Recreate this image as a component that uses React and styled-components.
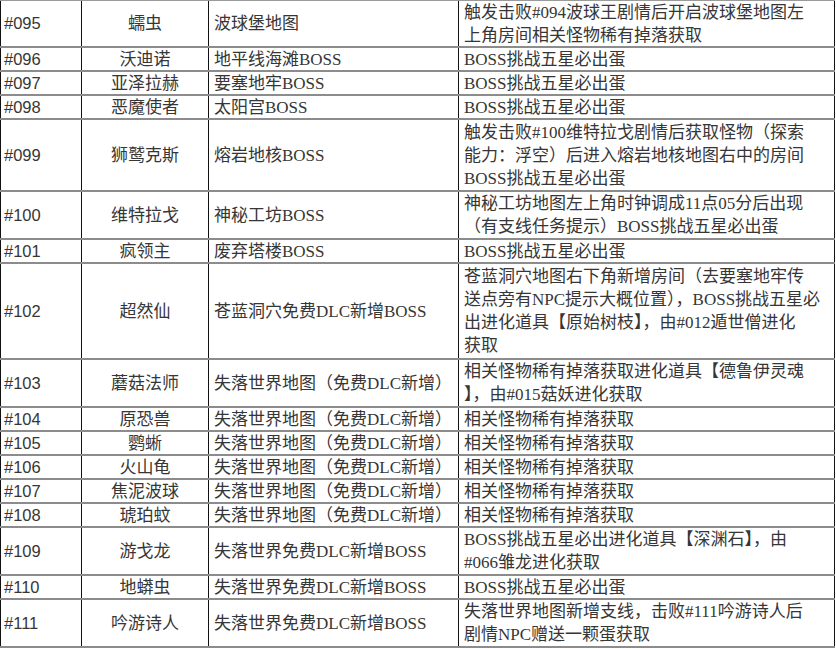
import styled, { createGlobalStyle } from "styled-components";

const GlobalStyle = createGlobalStyle`
  html, body {
    margin: 0;
    padding: 0;
    background: #ffffff;
  }
  body {
    font-family: "Liberation Serif", "Noto Sans CJK SC", serif;
    color: #363636;
  }
`;

const ALL_BOSS = ["BOSS挑战五星必出蛋"];
const LOST_MAP = "失落世界地图（免费DLC新增）";
const LOST_DROP = ["相关怪物稀有掉落获取"];
const LOST_BOSS = "失落世界免费DLC新增BOSS";

const rows = [
  {
    id: "#095",
    name: "蠕虫",
    place: "波球堡地图",
    how: ["触发击败#094波球王剧情后开启波球堡地图左", "上角房间相关怪物稀有掉落获取"],
  },
  { id: "#096", name: "沃迪诺", place: "地平线海滩BOSS", how: ALL_BOSS },
  { id: "#097", name: "亚泽拉赫", place: "要塞地牢BOSS", how: ALL_BOSS },
  { id: "#098", name: "恶魔使者", place: "太阳宫BOSS", how: ALL_BOSS },
  {
    id: "#099",
    name: "狮鹫克斯",
    place: "熔岩地核BOSS",
    how: [
      "触发击败#100维特拉戈剧情后获取怪物（探索",
      "能力：浮空）后进入熔岩地核地图右中的房间",
      "BOSS挑战五星必出蛋",
    ],
  },
  {
    id: "#100",
    name: "维特拉戈",
    place: "神秘工坊BOSS",
    how: ["神秘工坊地图左上角时钟调成11点05分后出现", "（有支线任务提示）BOSS挑战五星必出蛋"],
  },
  { id: "#101", name: "疯领主", place: "废弃塔楼BOSS", how: ALL_BOSS },
  {
    id: "#102",
    name: "超然仙",
    place: "苍蓝洞穴免费DLC新增BOSS",
    how: [
      "苍蓝洞穴地图右下角新增房间（去要塞地牢传",
      "送点旁有NPC提示大概位置），BOSS挑战五星必",
      "出进化道具【原始树枝】，由#012遁世僧进化",
      "获取",
    ],
  },
  {
    id: "#103",
    name: "蘑菇法师",
    place: LOST_MAP,
    how: ["相关怪物稀有掉落获取进化道具【德鲁伊灵魂", "】，由#015菇妖进化获取"],
  },
  { id: "#104", name: "原恐兽", place: LOST_MAP, how: LOST_DROP },
  { id: "#105", name: "鹦蜥", place: LOST_MAP, how: LOST_DROP },
  { id: "#106", name: "火山龟", place: LOST_MAP, how: LOST_DROP },
  { id: "#107", name: "焦泥波球", place: LOST_MAP, how: LOST_DROP },
  { id: "#108", name: "琥珀蚊", place: LOST_MAP, how: LOST_DROP },
  {
    id: "#109",
    name: "游戈龙",
    place: LOST_BOSS,
    how: ["BOSS挑战五星必出进化道具【深渊石】，由", "#066雏龙进化获取"],
  },
  { id: "#110", name: "地蟒虫", place: LOST_BOSS, how: ALL_BOSS },
  {
    id: "#111",
    name: "吟游诗人",
    place: LOST_BOSS,
    how: ["失落世界地图新增支线，击败#111吟游诗人后", "剧情NPC赠送一颗蛋获取"],
  },
];

const Sheet = styled.div`
  width: 835px;
  border-top: 1px solid #9a9a9a;
`;

const Row = styled.div`
  display: grid;
  grid-template-columns: 81px 127px 250px 377px;
  height: ${(p) => p.$lines * 24}px;
  box-sizing: border-box;
  border-bottom: 2px solid #8c8c8c;
`;

const Cell = styled.div`
  display: flex;
  flex-direction: column;
  justify-content: center;
  align-items: ${(p) => (p.$center ? "center" : "flex-start")};
  padding: 0 ${(p) => p.$pad || 5}px;
  border-left: 1.5px solid #111;
  font-size: 17px;
  line-height: 23px;
  white-space: nowrap;
  overflow: hidden;
  box-sizing: border-box;
`;

const IdCell = styled(Cell)`
  font-family: "Liberation Sans", "Noto Sans CJK SC", sans-serif;
  font-size: 16.5px;
`;

const NoteCell = styled(Cell)`
  border-right: 1.5px solid #111;
`;

export default function App() {
  return (
    <>
      <GlobalStyle />
      <Sheet>
        {rows.map((r) => (
          <Row key={r.id} $lines={r.id === "#095" ? 1.96 : r.how.length}>
            <IdCell $pad={3}>{r.id}</IdCell>
            <Cell $center>{r.name}</Cell>
            <Cell>{r.place}</Cell>
            <NoteCell>
              {r.how.map((line, i) => (
                <span key={i}>{line}</span>
              ))}
            </NoteCell>
          </Row>
        ))}
      </Sheet>
    </>
  );
}
